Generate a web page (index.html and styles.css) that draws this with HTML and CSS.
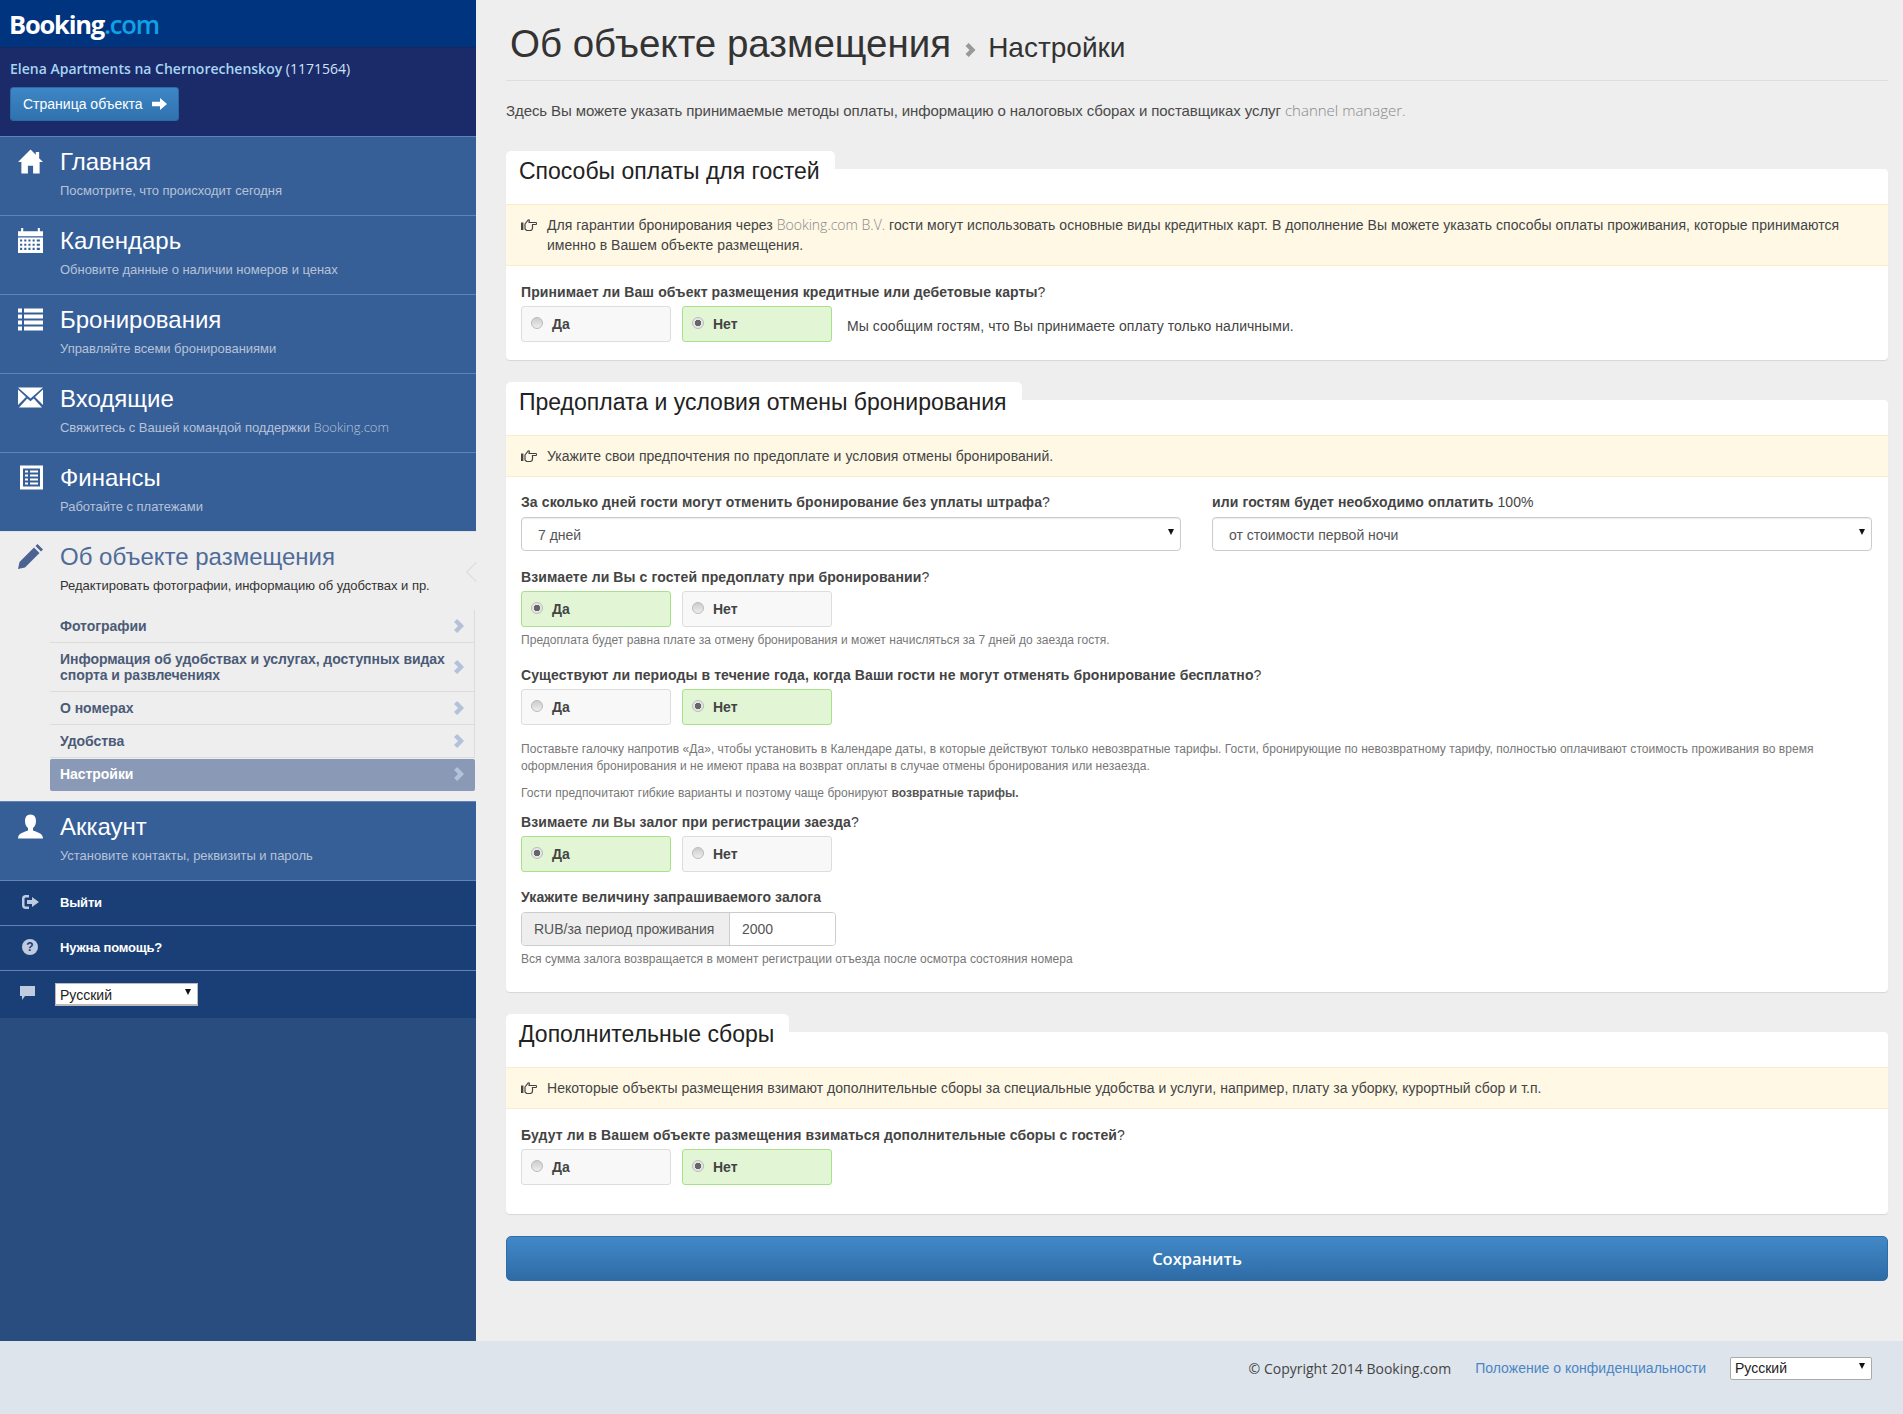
FILE: index.html
```html
<!DOCTYPE html>
<html lang="ru">
<head>
<meta charset="utf-8">
<title>Booking.com Extranet</title>
<link rel="stylesheet" href="styles.css">
</head>
<body>
<svg class="sprite" aria-hidden="true">
  <symbol id="i-chev" viewBox="0 0 10 14"><path d="M3.2 0 10 7l-6.800 7L0 11l4-4-4-4z"/></symbol>
  <symbol id="i-hand" viewBox="0 0 16 12"><path fill="none" stroke="currentColor" stroke-width="1.200" d="M4 5 7.200 1c1-.6 1.500.2 1 1.500L8 3.500h6.800c1.200 0 1.200 2 0 2h-3.300V9c0 1.500-1 2.500-2.500 2.500H5.700L4 10z"/><path d="M0 3.500h2.400V11H0z"/></symbol>
</svg>
<div class="page">
  <div class="main">
    <aside class="sidebar">
      <div class="brand"><span class="logo">Booking<span class="logo-dot">.com</span></span></div>
      <div class="property">
        <div class="prop-name"><b>Elena Apartments na Chernorechenskoy</b> (1171564)</div>
        <a class="prop-btn">Страница объекта
          <svg class="prop-arrow" viewBox="0 0 15 12"><path d="M8 0l7 6-7 6V8.300H0V3.700h8z"/></svg>
        </a>
      </div>
      <nav>
        <a class="nav-item">
          <svg class="nav-icon" viewBox="0 0 26 25"><path d="M13 0 0 13h3.500v12h6.800v-8h5.400v8h6.800V13H26l-4-4V2.500h-3.500V5.500z"/></svg>
          <div><div class="nav-title">Главная</div><div class="nav-sub">Посмотрите, что происходит сегодня</div></div>
        </a>
        <a class="nav-item">
          <svg class="nav-icon" viewBox="0 0 24 24"><path d="M0 3h3V0h2v3h14V0h2v3h3v5H0z"/><path fill-rule="evenodd" d="M0 9h24v15H0zM2 11v2h2v-2zm4 0v2h2v-2zm4 0v2h2v-2zm4 0v2h2v-2zm4 0v2h3v-2zM2 15v2h2v-2zm4 0v2h2v-2zm4 0v2h2v-2zm4 0v2h2v-2zm4 0v2h3v-2zM2 19v2h2v-2zm4 0v2h2v-2zm4 0v2h2v-2zm4 0v2h2v-2zm4 0v2h3v-2z"/></svg>
          <div><div class="nav-title">Календарь</div><div class="nav-sub">Обновите данные о наличии номеров и ценах</div></div>
        </a>
        <a class="nav-item">
          <svg class="nav-icon" viewBox="0 0 25 24"><path d="M0 1h4v4H0zM6 1h19v4H6zM0 7h4v4H0zM6 7h19v4H6zM0 13h4v4H0zM6 13h19v4H6zM0 19h4v4H0zM6 19h19v4H6z"/></svg>
          <div><div class="nav-title">Бронирования</div><div class="nav-sub">Управляйте всеми бронированиями</div></div>
        </a>
        <a class="nav-item">
          <svg class="nav-icon" viewBox="0 0 25 24"><path d="M0 1h25L12.500 12zM0 3 8 10.500 0 18.500zM25 3 17 10.500l8 8zM1 21 9.300 12l3.200 2.800L15.700 12l8.300 9z"/></svg>
          <div><div class="nav-title">Входящие</div><div class="nav-sub">Свяжитесь с Вашей командой поддержки <span class="lat">Booking.com</span></div></div>
        </a>
        <a class="nav-item">
          <svg class="nav-icon icon-alt" viewBox="0 0 23 24"><path fill-rule="evenodd" d="M0 0h23v24H0zM3 3v18h17V3zM5 5h3v2H5zm5 0h8v2h-8zM5 9h3v2H5zm5 0h8v2h-8zM5 13h3v2H5zm5 0h8v2h-8zM5 17h3v2H5zm5 0h8v2h-8z"/></svg>
          <div><div class="nav-title">Финансы</div><div class="nav-sub">Работайте с платежами</div></div>
        </a>
        <div class="nav-active">
          <span class="notch"></span>
          <div class="nav-item nav-item-on">
            <svg class="nav-icon" viewBox="0 0 25 25"><path d="M19.500 0 25 5.500l-2 2L17.500 2zM16 3.500 21.500 9 7 23.500 0 25l1.500-7z"/></svg>
            <div><div class="nav-title">Об объекте размещения</div><div class="nav-sub">Редактировать фотографии, информацию об удобствах и пр.</div></div>
          </div>
          <ul class="subnav">
            <li class="subnav-item"><span>Фотографии</span><svg class="chev"><use href="#i-chev"/></svg></li>
            <li class="subnav-item subnav-two"><span>Информация об удобствах и услугах, доступных видах спорта и развлечениях</span><svg class="chev"><use href="#i-chev"/></svg></li>
            <li class="subnav-item"><span>О номерах</span><svg class="chev"><use href="#i-chev"/></svg></li>
            <li class="subnav-item"><span>Удобства</span><svg class="chev"><use href="#i-chev"/></svg></li>
            <li class="subnav-item subnav-on"><span>Настройки</span><svg class="chev"><use href="#i-chev"/></svg></li>
          </ul>
        </div>
        <a class="nav-item nav-account">
          <svg class="nav-icon" viewBox="0 0 25 24"><path d="M12.500 0c3.700 0 5.500 2.800 5.500 6.500 0 3-1.200 5.800-3 7v2.500c3 1.500 10 2.300 10 8H0c0-5.700 7-6.500 10-8v-2.500c-1.800-1.200-3-4-3-7C7 2.800 8.800 0 12.500 0z"/></svg>
          <div><div class="nav-title">Аккаунт</div><div class="nav-sub">Установите контакты, реквизиты и пароль</div></div>
        </a>
        <a class="nav-mini">
          <svg class="mini-icon" viewBox="0 0 17 14"><path d="M7 0H3.500C1.500 0 0 1.500 0 3.500v7C0 12.500 1.500 14 3.500 14H7v-2.500H4c-1 0-1.500-.5-1.500-1.500V4c0-1 .5-1.500 1.500-1.500h3z"/><path d="M10 2l7 5-7 5V9H5V5h5z"/></svg>
          <span>Выйти</span>
        </a>
        <a class="nav-mini">
          <span class="mini-q">?</span>
          <span>Нужна помощь?</span>
        </a>
        <div class="nav-lang">
          <svg class="lang-icon" viewBox="0 0 15 14"><path d="M0 0h15v10H5l-3 4v-4H0z"/></svg>
          <label class="select-box select-side"><select class="select-plain"><option>Русский</option></select></label>
        </div>
      </nav>
    </aside>

    <main class="content">
      <header class="head">
        <h1 class="head-title">Об объекте размещения</h1>
        <svg class="head-chev"><use href="#i-chev"/></svg>
        <span class="head-sub">Настройки</span>
      </header>
      <p class="intro">Здесь Вы можете указать принимаемые методы оплаты, информацию о налоговых сборах и поставщиках услуг <span class="lat">channel manager.</span></p>

      <section class="card card-first">
        <h2 class="card-tab">Способы оплаты для гостей</h2>
        <div class="alert">
          <svg class="hand"><use href="#i-hand"/></svg>
          <div>Для гарантии бронирования через <span class="lat">Booking.com B.V.</span> гости могут использовать основные виды кредитных карт. В дополнение Вы можете указать способы оплаты проживания, которые принимаются именно в Вашем объекте размещения.</div>
        </div>
        <div class="card-body body-one">
          <div class="label">Принимает ли Ваш объект размещения кредитные или дебетовые карты<span class="q">?</span></div>
          <div class="radios">
            <label class="radio"><span class="dot"></span>Да</label>
            <label class="radio radio-on"><span class="dot"></span>Нет</label>
            <span class="radio-note">Мы сообщим гостям, что Вы принимаете оплату только наличными.</span>
          </div>
        </div>
      </section>

      <section class="card">
        <h2 class="card-tab">Предоплата и условия отмены бронирования</h2>
        <div class="alert">
          <svg class="hand"><use href="#i-hand"/></svg>
          <div>Укажите свои предпочтения по предоплате и условия отмены бронирований.</div>
        </div>
        <div class="card-body body-two">
          <div class="two-cols">
            <div>
              <div class="label">За сколько дней гости могут отменить бронирование без уплаты штрафа<span class="q">?</span></div>
              <label class="select-box select-form"><select class="select-plain"><option>7 дней</option></select></label>
            </div>
            <div>
              <div class="label">или гостям будет необходимо оплатить <span class="q">100%</span></div>
              <label class="select-box select-form"><select class="select-plain"><option>от стоимости первой ночи</option></select></label>
            </div>
          </div>
          <div class="label gap-16">Взимаете ли Вы с гостей предоплату при бронировании<span class="q">?</span></div>
          <div class="radios">
            <label class="radio radio-on"><span class="dot"></span>Да</label>
            <label class="radio"><span class="dot"></span>Нет</label>
          </div>
          <p class="help help-a">Предоплата будет равна плате за отмену бронирования и может начисляться за 7 дней до заезда гостя.</p>
          <div class="label gap-16">Существуют ли периоды в течение года, когда Ваши гости не могут отменять бронирование бесплатно<span class="q">?</span></div>
          <div class="radios">
            <label class="radio"><span class="dot"></span>Да</label>
            <label class="radio radio-on"><span class="dot"></span>Нет</label>
          </div>
          <p class="help help-b">Поставьте галочку напротив «Да», чтобы установить в Календаре даты, в которые действуют только невозвратные тарифы. Гости, бронирующие по невозвратному тарифу, полностью оплачивают стоимость проживания во время оформления бронирования и не имеют права на возврат оплаты в случае отмены бронирования или незаезда.</p>
          <p class="help help-c">Гости предпочитают гибкие варианты и поэтому чаще бронируют <b>возвратные тарифы.</b></p>
          <div class="label gap-10">Взимаете ли Вы залог при регистрации заезда<span class="q">?</span></div>
          <div class="radios">
            <label class="radio radio-on"><span class="dot"></span>Да</label>
            <label class="radio"><span class="dot"></span>Нет</label>
          </div>
          <div class="label gap-15">Укажите величину запрашиваемого залога</div>
          <div class="amount">
            <span class="amount-unit">RUB/за период проживания</span>
            <span class="amount-value">2000</span>
          </div>
          <p class="help help-d">Вся сумма залога возвращается в момент регистрации отъезда после осмотра состояния номера</p>
        </div>
      </section>

      <section class="card">
        <h2 class="card-tab">Дополнительные сборы</h2>
        <div class="alert">
          <svg class="hand"><use href="#i-hand"/></svg>
          <div>Некоторые объекты размещения взимают дополнительные сборы за специальные удобства и услуги, например, плату за уборку, курортный сбор и т.п.</div>
        </div>
        <div class="card-body body-three">
          <div class="label">Будут ли в Вашем объекте размещения взиматься дополнительные сборы с гостей<span class="q">?</span></div>
          <div class="radios">
            <label class="radio"><span class="dot"></span>Да</label>
            <label class="radio radio-on"><span class="dot"></span>Нет</label>
          </div>
        </div>
      </section>

      <button class="save" type="button">Сохранить</button>
    </main>
  </div>

  <footer class="footer">
    <span class="copy">© Copyright 2014 Booking.com</span>
    <a class="foot-link">Положение о конфиденциальности</a>
    <label class="select-box select-foot"><select class="select-plain"><option>Русский</option></select></label>
  </footer>
</div>
</body>
</html>
```
FILE: styles.css
```css
* { box-sizing: border-box; }
html, body { margin: 0; padding: 0; }
body {
  font-family: "Liberation Sans", Arial, sans-serif;
  font-size: 14px;
  color: #444;
  background: #eee;
}
.sprite { display: none; }
.page { width: 1903px; height: 1414px; display: flex; flex-direction: column; }
.main { display: flex; height: 1341px; }
p, h1, h2, ul { margin: 0; padding: 0; }
ul { list-style: none; }
.lat { font-family: "Open Sans", sans-serif; font-weight: 300; line-height: 1; color: #888; letter-spacing: 0; }

/* sidebar */
.sidebar { width: 476px; flex: none; background: #2a4d80; }
.brand { height: 48px; background: #00347f; padding: 8px 0 0 9px; border-bottom: 1px solid #17275f; }
.logo { font-family: "Open Sans", sans-serif; font-weight: 700; font-size: 25.500px; line-height: 32px; letter-spacing: -1.200px; color: #fff; }
.logo-dot { color: #0ea2e8; font-weight: 600; }
.property { height: 88px; background: #1b2a68; padding: 11px 0 0 10px; }
.prop-name { font-family: "Open Sans", sans-serif; font-size: 14px; line-height: 20px; color: #cfe3f5; }
.prop-name b { font-weight: 600; color: #a6d5f2; }
.prop-btn {
  display: flex; align-items: center; gap: 9px;
  width: 169px; height: 34px; margin-top: 8px; padding-left: 12px;
  font-size: 14px; color: #fff; border-radius: 3px;
  background: linear-gradient(#3e86c6, #2f72ae);
  border: 1px solid #2c6aa3;
}
.prop-arrow { width: 15px; height: 12px; fill: #fff; }
.nav-item {
  display: flex; height: 79px;
  background: #365e97; border-top: 1px solid #6482b3;
  padding: 10px 0 0 18px; color: #fff;
}
.nav-icon { width: 25px; height: 25px; flex: none; margin: 2px 17px 0 0; fill: #fff; }
.icon-alt { width: 23px; margin-left: 2px; margin-right: 17px; }
.nav-title { font-size: 24px; line-height: 30px; color: #fff; }
.nav-sub { font-size: 13px; line-height: 18px; margin-top: 5px; letter-spacing: -.03px; color: #b7c3d8; }
.nav-sub .lat { color: #b7c3d8; }
.nav-active { position: relative; background: #eee; height: 270px; border-top: 1px solid #dfe3ea; }
.nav-item-on { background: none; border-top: 0; height: 78px; }
.nav-item-on .nav-icon { fill: #4a6391; }
.nav-item-on .nav-title { color: #4f6b99; }
.nav-item-on .nav-sub { color: #333; }
.notch {
  position: absolute; right: -7px; top: 33px; width: 14px; height: 14px;
  transform: rotate(45deg); background: #eee;
  border-left: 1px solid #dadada; border-bottom: 1px solid #dadada;
}
.subnav { margin-left: 50px; margin-right: 1px; }
.subnav-item {
  display: flex; align-items: center; justify-content: space-between;
  height: 33px; padding: 0 10px 0 10px;
  font-size: 14px; font-weight: 700; line-height: 16px; letter-spacing: -.05px; color: #4b5b77;
  border-bottom: 1px solid #dcdcdc; border-right: 1px solid #dcdcdc;
}
.subnav-two { height: 49px; }
.subnav-two span { width: 388px; }
.subnav-on { background: #8a99b6; color: #fff; border: 0; height: 32px; border-radius: 2px; margin-top: 1px; padding-bottom: 2px; padding-right: 11px; }
.chev { width: 10px; height: 14px; flex: none; fill: #b3c1d9; }
.nav-account { height: 79px; }
.nav-mini {
  display: flex; align-items: center; height: 45px; padding: 0 0 2px 22px;
  background: #1a3e76; border-top: 1px solid #6482b3;
  color: #fff; font-size: 13px; font-weight: 700; letter-spacing: -.2px;
}
.mini-icon { width: 17px; height: 14px; fill: #c0cbe0; margin-right: 21px; }
.mini-q {
  width: 16px; height: 16px; margin-right: 22px; border-radius: 50%; letter-spacing: 0;
  background: #c0cbe0; color: #1a3e76; font-size: 12px; line-height: 16px; text-align: center;
}
.nav-lang {
  display: flex; align-items: center; height: 48px; padding-left: 20px;
  background: #1a3e76; border-top: 1px solid #6482b3;
}
.lang-icon { width: 15px; height: 14px; fill: #c0cbe0; margin: -4px 20px 0 0; }

/* selects */
.select-box { display: block; position: relative; background: #fff; }
.select-box::after {
  content: ""; position: absolute; top: 50%; right: 6px; margin-top: -5px;
  border-left: 3px solid transparent; border-right: 3px solid transparent; border-top: 6px solid #111;
  pointer-events: none;
}
.select-plain {
  appearance: none; -webkit-appearance: none; display: block; width: 100%; height: 100%;
  border: 0; background: transparent; font-family: "Liberation Sans", Arial, sans-serif; font-size: 14px; color: #222; outline: 0;
}
.select-side { width: 143px; height: 23px; border: 2px solid #bbb; border-width: 1px 1px 2px 1px; }
.select-side .select-plain { padding: 1px 0 0 4px; }
.select-foot { width: 142px; height: 23px; border: 1px solid #aaa; border-radius: 2px; }
.select-foot .select-plain { padding-left: 4px; }
.select-form { height: 34px; margin-top: 5px; border: 1px solid #ccc; border-radius: 4px; box-shadow: inset 0 1px 1px rgba(0,0,0,.08); }
.select-form .select-plain { padding: 1px 0 0 16px; color: #555; }

/* content */
.content { flex: 1; padding: 0 15px 0 30px; min-width: 0; }
.head { display: flex; align-items: baseline; height: 81px; padding: 21px 0 0 4px; border-bottom: 1px solid #ddd; }
.head-title { font-size: 38.500px; line-height: 46px; font-weight: 400; color: #333; }
.head-chev { width: 11px; height: 14px; margin: 0 12px 0 14px; fill: #999; }
.head-sub { font-size: 28px; color: #333; }
.intro { margin-top: 20px; line-height: 20px; color: #4a4a4a; font-size: 15px; letter-spacing: -.09px; }
.card { display: flow-root; margin-top: 40px; background: #fff; border-radius: 4px; box-shadow: 0 1px 1px rgba(0,0,0,.1); }
.card-first { margin-top: 48px; }
.card-tab {
  width: fit-content; height: 53px; margin-top: -18px;
  padding: 5px 15px 0 13px; background: #fff; border-radius: 5px 5px 0 0;
  font-size: 23px; font-weight: 400; line-height: 30px; color: #222;
}
.alert {
  display: flex; gap: 9px; padding: 10px 40px 10px 15px;
  background: #fef8e5; border-top: 1px solid #fcedc9; border-bottom: 1px solid #fcedc9;
  font-size: 14px; line-height: 20px; letter-spacing: .04px; color: #444;
}
.hand { width: 16px; height: 12px; flex: none; margin: 4px 1px 0 0; color: #444; fill: #444; }
.card-body { padding: 0 16px 0 15px; }
.body-one { padding-top: 16px; padding-bottom: 18px; }
.body-two { padding-top: 15px; padding-bottom: 24px; }
.body-three { padding-top: 16px; padding-bottom: 29px; }
.label { font-size: 14px; font-weight: 700; line-height: 20px; letter-spacing: .1px; color: #444; }
.q { font-weight: 400; }
.gap-16 { margin-top: 16px; }
.gap-10 { margin-top: 10px; }
.gap-15 { margin-top: 15px; }
.radios { display: flex; align-items: center; gap: 11px; margin-top: 4px; }
.radio {
  display: flex; align-items: center; gap: 9px; width: 150px; height: 36px; padding: 0 0 0 9px;
  background: #f8f8f8; border: 1px solid #ddd; border-radius: 3px;
  font-size: 14px; font-weight: 700; color: #444;
}
.radio-on { background: #e2f6d5; border-color: #a9e08a; }
.dot { width: 12px; height: 12px; margin-top: -2px; border-radius: 50%; border: 1px solid #bbb; background: linear-gradient(#ccc, #eee); }
.radio-on .dot { background: radial-gradient(circle, #666 0 3px, #e6e6e6 3.500px); }
.radio-note { margin: 4px 0 0 4px; font-size: 14px; letter-spacing: .05px; color: #444; }
.two-cols { display: grid; grid-template-columns: 660px 660px; gap: 31px; }
.help { font-size: 12px; line-height: 17px; letter-spacing: .04px; color: #777; }
.help b { color: #555; }
.help-a { margin-top: 5px; }
.help-b { margin-top: 16px; }
.help-c { margin-top: 10px; }
.help-d { margin-top: 5px; }
.amount { display: flex; width: 315px; height: 34px; margin-top: 5px; border: 1px solid #ccc; border-radius: 4px; overflow: hidden; font-size: 14px; line-height: 32px; }
.amount-unit { width: 208px; padding-left: 12px; background: #eee; border-right: 1px solid #ccc; color: #555; }
.amount-value { padding-left: 12px; color: #555; background: #fff; flex: 1; }
.save {
  display: block; width: 100%; height: 45px; margin-top: 22px;
  background: linear-gradient(#4289c8, #2e6ba5); border: 1px solid #2f6da6; border-radius: 5px;
  color: #fff; font-family: "Open Sans", sans-serif; font-size: 16.500px; font-weight: 600;
}

/* footer */
.footer {
  height: 73px; display: flex; align-items: center; justify-content: flex-end;
  padding: 0 31px 19px 0; background: #dde4ec; font-size: 14px;
}
.copy { font-family: "Open Sans", sans-serif; color: #444; }
.foot-link { margin: 0 24px; letter-spacing: .02px; color: #4a86c5; }
```
